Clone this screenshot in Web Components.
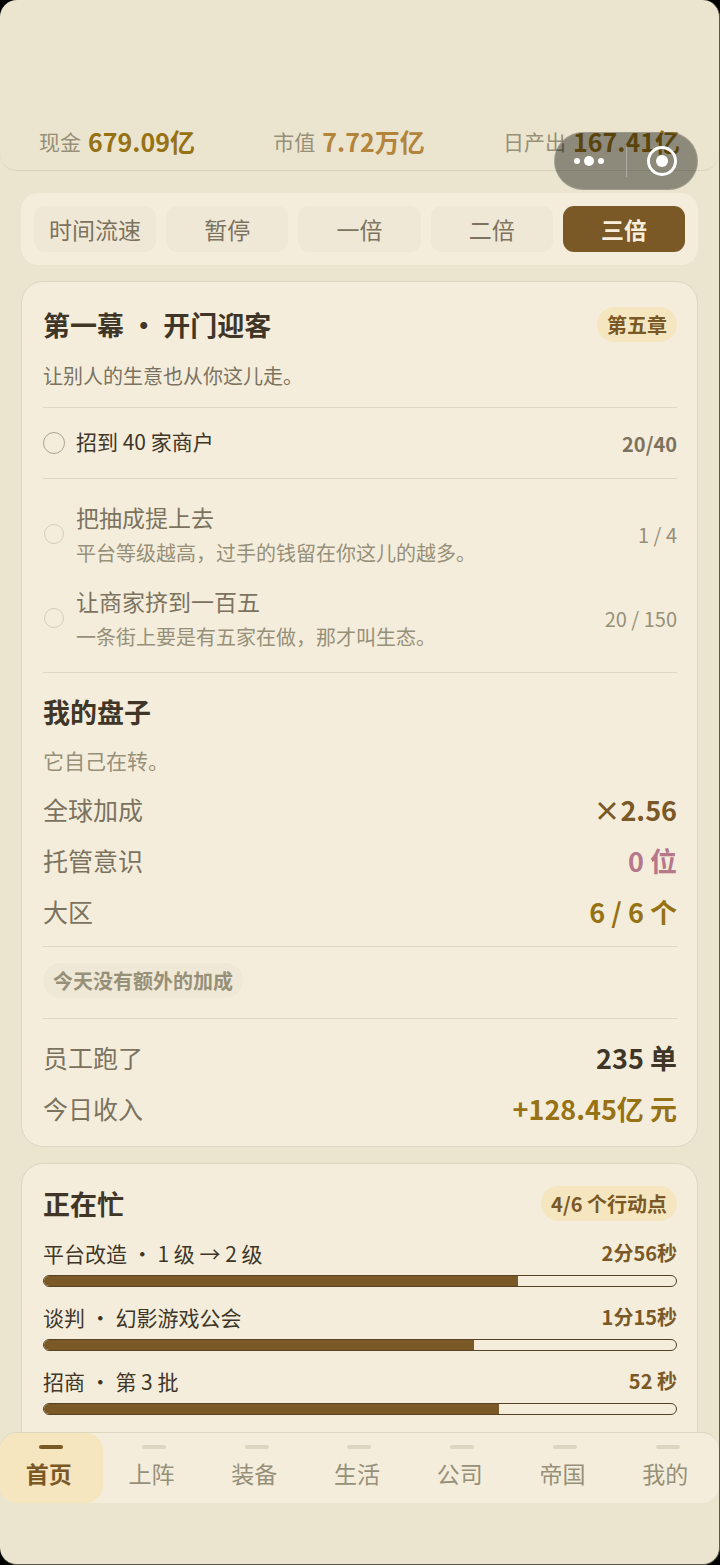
<!DOCTYPE html>
<html lang="zh-CN">
<head>
<meta charset="utf-8">
<meta name="viewport" content="width=device-width, initial-scale=1">
<title>首页</title>
<style>
  :root {
    --page: #ebe4ce;
    --card: #f4eddc;
    --chip: #efe8d6;
    --line: #ded6c1;
    --ink: #3f3628;
    --ink-2: #7c735f;
    --ink-3: #979079;
    --brown: #7a5927;
    --gold: #967214;
    --amber: #b3843c;
    --rose: #b5788a;
    --glow: #f5e6c0;
  }
  body {
    margin: 0;
    background: #000;
    color: var(--ink);
    font-family: "Noto Sans CJK SC", "Noto Sans", sans-serif;
  }
</style>
</head>
<body>
<game-screen>
  <stat-header slot="header">
    <stat-item label="现金">679.09亿</stat-item>
    <stat-item label="市值" tone="amber">7.72万亿</stat-item>
    <stat-item label="日产出">167.41亿</stat-item>
  </stat-header>
  <capsule-menu slot="capsule"></capsule-menu>

  <speed-bar options="时间流速,暂停,一倍,二倍,三倍" selected="三倍"></speed-bar>

  <game-card>
    <card-head heading="第一幕 · 开门迎客"><pill-tag>第五章</pill-tag></card-head>
    <card-note>让别人的生意也从你这儿走。</card-note>
    <rule-line style="--before:16px"></rule-line>
    <goal-item current value="20/40">招到 40 家商户</goal-item>
    <rule-line></rule-line>
    <goal-list>
      <goal-item value="1 / 4">把抽成提上去<span slot="hint">平台等级越高，过手的钱留在你这儿的越多。</span></goal-item>
      <goal-item value="20 / 150">让商家挤到一百五<span slot="hint">一条街上要是有五家在做，那才叫生态。</span></goal-item>
    </goal-list>
    <rule-line></rule-line>
    <card-head heading="我的盘子" section></card-head>
    <card-note faint>它自己在转。</card-note>
    <data-rows>
      <data-row label="全球加成" tone="brown">×2.56</data-row>
      <data-row label="托管意识" tone="rose">0 位</data-row>
      <data-row label="大区" tone="gold">6 / 6 个</data-row>
    </data-rows>
    <rule-line style="--before:9px"></rule-line>
    <tag-row><pill-tag muted>今天没有额外的加成</pill-tag></tag-row>
    <rule-line></rule-line>
    <data-rows lead>
      <data-row label="员工跑了">235 单</data-row>
      <data-row label="今日收入" tone="gold">+128.45亿 元</data-row>
    </data-rows>
  </game-card>

  <game-card compact>
    <card-head heading="正在忙"><pill-tag>4/6 个行动点</pill-tag></card-head>
    <task-list>
      <task-item time="2分56秒" percent="75">平台改造 · 1 级 → 2 级</task-item>
      <task-item time="1分15秒" percent="68">谈判 · 幻影游戏公会</task-item>
      <task-item time="52 秒" percent="72">招商 · 第 3 批</task-item>
    </task-list>
  </game-card>

  <tab-nav slot="nav" tabs="首页,上阵,装备,生活,公司,帝国,我的" selected="首页"></tab-nav>
</game-screen>

<script>
const define = (name, render) => customElements.define(name, class extends HTMLElement {
  connectedCallback() {
    if (!this.shadowRoot) this.attachShadow({ mode: 'open' }).innerHTML = render(this);
  }
});
const attr = (el, name) => el.getAttribute(name) || '';

define('game-screen', () => `
  <style>
    :host { display: flex; flex-direction: column; box-sizing: border-box; height: 100vh; position: relative;
      background: var(--page); border: solid #5c5749; border-width: 0 1px 1px 0; border-radius: 17px; overflow: hidden; }
    main { flex: 1; min-height: 0; overflow-y: auto; scrollbar-width: none;
      display: flex; flex-direction: column; gap: 16px; padding: 22px 21px 0; }
    footer { padding-bottom: 61px; }
  </style>
  <slot name="header"></slot>
  <main><slot></slot></main>
  <footer><slot name="nav"></slot></footer>
  <slot name="capsule"></slot>`);

define('stat-header', () => `
  <style>
    :host { display: block; }
    header { display: flex; justify-content: space-between; padding: 121px 39px 9px;
      border-bottom: 1px solid #d9d2bd; border-radius: 0 0 17px 17px; }
  </style>
  <header><slot></slot></header>`);

define('stat-item', el => `
  <style>
    :host { display: flex; align-items: center; gap: 7px; line-height: 40px; white-space: nowrap; }
    span { font-size: 21px; color: var(--ink-3); }
    b { font-size: 25px; color: var(--${attr(el, 'tone') || 'gold'}); }
  </style>
  <span>${attr(el, 'label')}</span><b><slot></slot></b>`);

define('capsule-menu', () => `
  <style>
    :host { display: flex; align-items: center; position: absolute; top: 132px; right: 21px;
      box-sizing: border-box; width: 144px; height: 58px; border-radius: 29px;
      background: rgba(0, 0, 0, .4); border: 1px solid rgba(235, 228, 206, .2); }
    button { flex: 1; height: 100%; padding: 0; border: 0; background: none; display: grid; place-items: center; }
    i { width: 1px; height: 32px; background: rgba(255, 255, 255, .3); }
    svg { display: block; fill: #fff; }
  </style>
  <button aria-label="更多"><svg width="32" height="32"><circle cx="3" cy="16" r="3"/><circle cx="15" cy="16" r="5"/><circle cx="27" cy="16" r="3"/></svg></button>
  <i></i>
  <button aria-label="关闭"><svg width="32" height="32"><circle cx="16" cy="16" r="13.5" fill="none" stroke="#fff" stroke-width="3"/><circle cx="16" cy="16" r="6"/></svg></button>`);

define('speed-bar', el => `
  <style>
    :host { display: grid; grid-auto-flow: column; grid-auto-columns: 1fr; gap: 10px; padding: 13px;
      background: var(--card); border-radius: 17px; flex: none; }
    button { height: 46px; padding: 0; border: 0; border-radius: 11px; background: var(--chip);
      color: var(--ink-2); font: 23px/46px "Noto Sans CJK SC", sans-serif; white-space: nowrap; }
    button[aria-pressed="true"] { background: var(--brown); color: #f8efdc; font-weight: 700; }
  </style>
  ${attr(el, 'options').split(',').map(o => `<button aria-pressed="${o === attr(el, 'selected')}">${o}</button>`).join('')}`);

define('game-card', () => `
  <style>
    :host { display: block; flex: none; background: var(--card); border: 1px solid var(--line);
      border-radius: 22px; padding: 25px 20px 12px 21px; }
    :host([compact]) { padding-top: 22px; padding-bottom: 60px; }
  </style>
  <slot></slot>`);

define('card-head', el => `
  <style>
    :host { display: flex; align-items: center; justify-content: space-between; min-height: 35px; }
    :host([section]) { min-height: 40px; padding-top: 18px; }
    h2 { margin: 0; font-size: 27px; line-height: 35px; font-weight: 700; }
  </style>
  <h2>${attr(el, 'heading')}</h2><slot></slot>`);

define('pill-tag', () => `
  <style>
    :host { display: inline-block; padding: 0 10px; border-radius: 18px; background: var(--glow);
      color: var(--brown); font-size: 20px; line-height: 35px; font-weight: 700; white-space: nowrap; }
    :host([muted]) { background: var(--chip); color: var(--ink-3); }
  </style>
  <slot></slot>`);

define('card-note', () => `
  <style>
    :host { display: block; margin-top: 19px; font-size: 20px; line-height: 30px; color: var(--ink-2); }
    :host([faint]) { margin-top: 14px; font-size: 21px; color: var(--ink-3); }
  </style>
  <slot></slot>`);

define('rule-line', () => `
  <style>
    :host { display: block; height: 1px; margin-top: var(--before, 0); background: var(--line); }
  </style>`);

define('goal-list', () => `
  <style>:host { display: grid; gap: 16px; padding: 21px 0 20px; }</style>
  <slot></slot>`);

define('goal-item', el => `
  <style>
    :host { display: grid; grid-template-columns: 22px 1fr auto; column-gap: 11px; align-items: center; }
    :host([current]) { min-height: 70px; }
    i { box-sizing: border-box; width: 20px; height: 20px; border: 1px solid #d5cdb9; border-radius: 50%; justify-self: center; }
    :host([current]) i { width: 22px; height: 22px; border-color: #aaa390; }
    div { display: grid; gap: 4px; font-size: 23px; line-height: 34px; color: var(--ink-2); }
    :host([current]) div { font-size: 21px; color: var(--ink); padding-bottom: 4px; }
    ::slotted([slot="hint"]) { font-size: 20px; line-height: 30px; color: var(--ink-3); }
    b { font-size: 20px; font-weight: 400; color: var(--ink-3); }
    :host([current]) b { font-weight: 700; color: var(--ink-2); }
  </style>
  <i></i><div><span><slot></slot></span><slot name="hint"></slot></div><b>${attr(el, 'value')}</b>`);

define('data-rows', () => `
  <style>:host { display: block; padding-top: 9px; } :host([lead]) { padding-top: 13px; }</style>
  <slot></slot>`);

define('data-row', el => `
  <style>
    :host { display: flex; justify-content: space-between; line-height: 51px; }
    span { font-size: 25px; color: var(--ink-2); }
    b { font-size: 27px; color: var(--${attr(el, 'tone') || 'ink'}); }
  </style>
  <span>${attr(el, 'label')}</span><b><slot></slot></b>`);

define('tag-row', () => `
  <style>:host { display: flex; padding: 16px 0 20px; }</style>
  <slot></slot>`);

define('task-list', () => `
  <style>:host { display: grid; gap: 15px; padding-top: 17px; }</style>
  <slot></slot>`);

define('task-item', el => `
  <style>
    :host { display: grid; gap: 7px; }
    .row { display: flex; justify-content: space-between; font-size: 21px; line-height: 30px; }
    b { color: var(--brown); font-size: 20px; }
    .track { box-sizing: border-box; height: 12px; border: 1px solid #564326; border-radius: 6px; overflow: hidden; }
    .fill { height: 100%; width: ${attr(el, 'percent')}%; background: var(--brown); }
  </style>
  <div class="row"><span><slot></slot></span><b>${attr(el, 'time')}</b></div>
  <div class="track" role="progressbar" aria-valuenow="${attr(el, 'percent')}" aria-valuemin="0" aria-valuemax="100"><div class="fill"></div></div>`);

define('tab-nav', el => `
  <style>
    :host { display: block; }
    nav { display: grid; grid-auto-flow: column; grid-auto-columns: 1fr; background: var(--card);
      border-radius: 17px; box-shadow: 0 -1px var(--line); }
    a { display: grid; justify-items: center; align-content: start; gap: 7px; padding: 12px 0; border-radius: 17px;
      font-size: 23px; line-height: 35px; color: var(--ink-3); text-decoration: none; }
    a::before { content: ""; width: 24px; height: 4px; border-radius: 2px; background: #dcd5bf; }
    span { padding-right: 5px; }
    a[aria-current] { background: var(--glow); color: var(--brown); font-weight: 700; }
    a[aria-current]::before { background: var(--brown); }
  </style>
  <nav>${attr(el, 'tabs').split(',').map(t => `<a href="#"${t === attr(el, 'selected') ? ' aria-current="page"' : ''}><span>${t}</span></a>`).join('')}</nav>`);
</script>
</body>
</html>
